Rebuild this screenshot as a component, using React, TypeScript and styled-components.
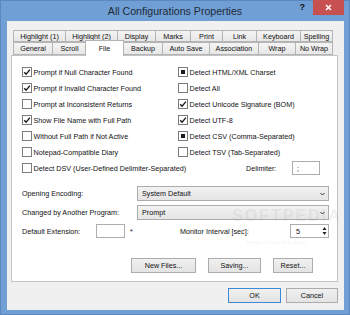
import * as React from 'react';
import styled, { createGlobalStyle } from 'styled-components';

const GlobalStyle = createGlobalStyle`
  html, body {
    margin: 0;
    padding: 0;
    background: #6f9fd5;
  }
  * {
    box-sizing: border-box;
  }
`;

const Window = styled.div`
  position: relative;
  width: 350px;
  height: 315px;
  background: #6f9fd5;
  box-shadow: inset 0 0 0 1px #5b88bf;
  display: flex;
  flex-direction: column;
  font-family: 'Liberation Sans', Arial, sans-serif;
  font-size: 7.2px;
  color: #111;
  overflow: hidden;
`;

const TitleBar = styled.div`
  height: 21px;
  display: grid;
  grid-template-columns: 1fr auto 1fr;
  align-items: start;
`;

const Title = styled.div`
  grid-column: 2;
  font-size: 10.6px;
  line-height: 22px;
  color: #1f2a36;
`;

const Controls = styled.div`
  grid-column: 3;
  justify-self: end;
  display: flex;
  align-items: flex-start;
  margin-right: 6px;
`;

const HelpGlyph = styled.span`
  font-weight: bold;
  font-size: 9px;
  line-height: 14px;
  margin-right: 8px;
  color: #111;
`;

const CloseButton = styled.div`
  width: 31px;
  height: 15px;
  background: #c75050;
  color: #fff;
  display: flex;
  align-items: center;
  justify-content: center;
`;

const Client = styled.div`
  flex: 1;
  margin: 0 6px 5px 7px;
  background: #f0f0f0;
  padding: 9px 6px 0 4px;
  display: flex;
  flex-direction: column;
`;

const TabStrip = styled.div`
  padding: 0 5px 0 2px;
  display: flex;
  flex-direction: column;
`;

const TabRow = styled.div<{ $h: number }>`
  display: flex;
  height: ${(p) => p.$h}px;
`;

const Tab = styled.div<{ $w: number; $active?: boolean }>`
  width: ${(p) => p.$w + (p.$active ? 2 : 0)}px;
  margin: ${(p) => (p.$active ? '-2px -1px -1px -1px' : '0')};
  border: 1px solid #b4b4b4;
  border-right: none;
  border-bottom: ${(p) => (p.$active ? 'none' : '1px solid #b4b4b4')};
  background: ${(p) =>
    p.$active ? '#ffffff' : 'linear-gradient(#f4f4f4, #e7e7e7)'};
  display: flex;
  align-items: ${(p) => (p.$active ? 'flex-start' : 'center')};
  padding-top: ${(p) => (p.$active ? '3px' : '0')};
  justify-content: center;
  white-space: nowrap;
  position: relative;
  z-index: ${(p) => (p.$active ? 2 : 1)};
  &:last-child {
    border-right: 1px solid #b4b4b4;
  }
  ${(p) => (p.$active ? 'border-right: 1px solid #b4b4b4;' : '')}
`;

const Panel = styled.div`
  position: relative;
  height: 227px;
  background: #fff;
  border: 1px solid #c4c4c4;
  padding: 8px 8px 0 10px;
  display: flex;
  flex-direction: column;
`;

const CheckGrid = styled.div`
  display: grid;
  grid-template-columns: 156px 1fr;
  grid-auto-rows: 16px;
`;

const CheckItem = styled.div`
  display: flex;
  align-items: center;
  gap: 1.5px;
  white-space: nowrap;
`;

const Box = styled.span`
  width: 10px;
  height: 10px;
  border: 1px solid #7c7c7c;
  background: #fff;
  display: inline-flex;
  align-items: center;
  justify-content: center;
  flex-shrink: 0;
`;

const Square = styled.span`
  width: 4px;
  height: 4px;
  background: #1a1a1a;
`;

const DsvRow = styled.div`
  display: flex;
  align-items: center;
  height: 16px;
`;

const DsvLabel = styled(CheckItem)`
  width: 224px;
`;

const Delim = styled.span`
  width: 46px;
`;

const TextBox = styled.div<{ $w: number }>`
  width: ${(p) => p.$w}px;
  height: 14px;
  border: 1px solid #abadb3;
  background: #fff;
  display: flex;
  align-items: center;
  padding-left: 4px;
`;

const FormRow = styled.div<{ $top: number }>`
  display: flex;
  align-items: center;
  margin-top: ${(p) => p.$top}px;
`;

const Label = styled.span<{ $w: number }>`
  width: ${(p) => p.$w}px;
  white-space: nowrap;
`;

const Select = styled.div`
  width: 192px;
  height: 15px;
  border: 1px solid #acacac;
  background: linear-gradient(#f2f2f2, #e5e5e5);
  display: flex;
  align-items: center;
  justify-content: space-between;
  padding: 0 3px 0 4px;
`;

const Star = styled.span`
  margin-left: 5px;
  width: 50px;
`;

const Spinner = styled.div`
  margin-left: auto;
  width: 39px;
  height: 14px;
  border: 1px solid #abadb3;
  background: #fff;
  display: flex;
  align-items: center;
  justify-content: space-between;
  padding: 0 1px 0 5px;
`;

const ButtonRow = styled.div<{ $top: number; $gap: number; $right: number }>`
  display: flex;
  justify-content: flex-end;
  gap: ${(p) => p.$gap}px;
  margin-top: ${(p) => p.$top}px;
  margin-right: ${(p) => p.$right}px;
`;

const Button = styled.div<{ $w: number; $default?: boolean }>`
  width: ${(p) => p.$w}px;
  height: 15px;
  border: 1px solid ${(p) => (p.$default ? '#3c8ad8' : '#acacac')};
  background: linear-gradient(#f0f0f0, #e3e3e3);
  display: flex;
  align-items: center;
  justify-content: center;
  white-space: nowrap;
`;

/* faint watermark stamped over the panel */
const Watermark = styled.span<{ $x: number; $y: number; $size: number }>`
  position: absolute;
  left: ${(p) => p.$x}px;
  top: ${(p) => p.$y}px;
  font-size: ${(p) => p.$size}px;
  font-weight: ${(p) => (p.$size > 10 ? 'bold' : 'normal')};
  letter-spacing: ${(p) => (p.$size > 10 ? 2 : 0.5)}px;
  line-height: 1;
  pointer-events: none;
  color: rgba(150, 150, 150, 0.14);
  white-space: nowrap;
`;

type CheckState = 'on' | 'off' | 'mixed';

const Check = ({ state }: { state: CheckState }) => (
  <Box>
    {state === 'on' && (
      <svg width="8" height="8" viewBox="0 0 8 8">
        <polyline
          points="1.2,4.2 3.1,6.2 6.9,1.6"
          fill="none"
          stroke="#1a1a1a"
          strokeWidth="1.4"
        />
      </svg>
    )}
    {state === 'mixed' && <Square />}
  </Box>
);

const Chevron = () => (
  <svg width="5" height="4" viewBox="0 0 5 4">
    <polyline points="0.5,1 2.5,3 4.5,1" fill="none" stroke="#333" strokeWidth="1" />
  </svg>
);

const SpinArrows = () => (
  <svg width="5" height="10" viewBox="0 0 5 10">
    <polygon points="2.5,1 4.5,4 0.5,4" fill="#222" />
    <polygon points="0.5,6 4.5,6 2.5,9" fill="#222" />
  </svg>
);

const topTabs: [string, number][] = [
  ['Highlight (1)', 52],
  ['Highlight (2)', 52],
  ['Display', 38],
  ['Marks', 35],
  ['Print', 32],
  ['Link', 34],
  ['Keyboard', 44],
  ['Spelling', 33],
];

const bottomTabs: [string, number][] = [
  ['General', 39],
  ['Scroll', 34],
  ['File', 37],
  ['Backup', 39],
  ['Auto Save', 47],
  ['Association', 49],
  ['Wrap', 37],
  ['No Wrap', 38],
];

const checks: [string, CheckState, string, CheckState][] = [
  ['Prompt if Null Character Found', 'on', 'Detect HTML/XML Charset', 'mixed'],
  ['Prompt if Invalid Character Found', 'on', 'Detect All', 'off'],
  ['Prompt at Inconsistent Returns', 'off', 'Detect Unicode Signature (BOM)', 'on'],
  ['Show File Name with Full Path', 'on', 'Detect UTF-8', 'on'],
  ['Without Full Path if Not Active', 'off', 'Detect CSV (Comma-Separated)', 'mixed'],
  ['Notepad-Compatible Diary', 'off', 'Detect TSV (Tab-Separated)', 'off'],
];

export default function App() {
  return (
    <>
      <GlobalStyle />
      <Window>
        <TitleBar>
          <Title>All Configurations Properties</Title>
          <Controls>
            <HelpGlyph>?</HelpGlyph>
            <CloseButton>
              <svg width="7" height="7" viewBox="0 0 7 7">
                <path d="M1 1 L6 6 M6 1 L1 6" stroke="#fff" strokeWidth="1.5" />
              </svg>
            </CloseButton>
          </Controls>
        </TitleBar>

        <Client>
          <TabStrip>
            <TabRow $h={12}>
              {topTabs.map(([name, w]) => (
                <Tab key={name} $w={w}>
                  {name}
                </Tab>
              ))}
            </TabRow>
            <TabRow $h={13}>
              {bottomTabs.map(([name, w]) => (
                <Tab key={name} $w={w} $active={name === 'File'}>
                  {name}
                </Tab>
              ))}
            </TabRow>
          </TabStrip>

          <Panel>
            <CheckGrid>
              {checks.map(([l, ls, r, rs]) => (
                <React.Fragment key={l}>
                  <CheckItem>
                    <Check state={ls} />
                    {l}
                  </CheckItem>
                  <CheckItem>
                    <Check state={rs} />
                    {r}
                  </CheckItem>
                </React.Fragment>
              ))}
            </CheckGrid>
            <DsvRow>
              <DsvLabel>
                <Check state="off" />
                Detect DSV (User-Defined Delimiter-Separated)
              </DsvLabel>
              <Delim>Delimiter:</Delim>
              <TextBox $w={28}>;</TextBox>
            </DsvRow>

            <FormRow $top={10}>
              <Label $w={115}>Opening Encoding:</Label>
              <Select>
                System Default
                <Chevron />
              </Select>
            </FormRow>
            <FormRow $top={4}>
              <Label $w={115}>Changed by Another Program:</Label>
              <Select>
                Prompt
                <Chevron />
              </Select>
            </FormRow>
            <FormRow $top={4}>
              <Label $w={74}>Default Extension:</Label>
              <TextBox $w={29} />
              <Star>*</Star>
              <Label $w={90}>Monitor Interval [sec]:</Label>
              <Spinner>
                5
                <SpinArrows />
              </Spinner>
            </FormRow>

            <ButtonRow $top={20} $gap={12} $right={16}>
              <Button $w={65}>New Files...</Button>
              <Button $w={53}>Saving...</Button>
              <Button $w={40}>Reset...</Button>
            </ButtonRow>

            <Watermark $x={220} $y={152} $size={16}>
              SOFTPEDIA
            </Watermark>
            <Watermark $x={234} $y={183} $size={6}>
              www.softpedia.com
            </Watermark>
          </Panel>

          <ButtonRow $top={6} $gap={5} $right={0}>
            <Button $w={53} $default>
              OK
            </Button>
            <Button $w={52}>Cancel</Button>
          </ButtonRow>
        </Client>
      </Window>
    </>
  );
}
